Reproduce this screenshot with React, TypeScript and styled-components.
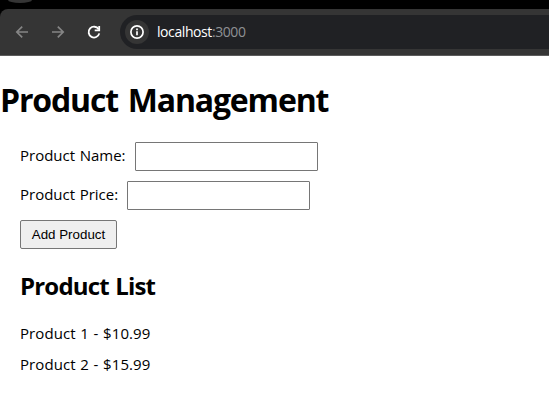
import React from "react";
import styled, { createGlobalStyle } from "styled-components";

const GlobalStyle = createGlobalStyle`
  * { box-sizing: border-box; }
  body {
    margin: 0;
    background: #fff;
    color: #000;
    font-family: "Open Sans", "Noto Sans", sans-serif;
    overflow: hidden;
  }
`;

const TabStrip = styled.div`
  height: 9px;
  background: #000;
  padding-left: 8px;
`;

const TabButton = styled.div`
  width: 24px;
  height: 3px;
  background: #353535;
  border-radius: 0 0 12px 12px / 0 0 3px 3px;
`;

const ToolbarBack = styled.div`
  background: #000;
`;

const Toolbar = styled.div`
  height: 47px;
  display: flex;
  align-items: center;
  background: #353535;
  border-bottom: 1px solid #5c5c5c;
  border-radius: 8px 0 0 0;
  padding-left: 14px;
`;

const NavButton = styled.div<{ $active?: boolean }>`
  width: 16px;
  height: 16px;
  margin-right: 20px;
  color: ${(p) => (p.$active ? "#fff" : "#858585")};
  svg { display: block; }
`;

const AddressBar = styled.div`
  flex: 1;
  height: 34px;
  margin-left: -2px;
  padding-left: 5px;
  display: flex;
  align-items: center;
  background: #202124;
  border-radius: 17px 0 0 17px;
`;

const SiteInfo = styled.div`
  width: 24px;
  height: 24px;
  display: flex;
  align-items: center;
  justify-content: center;
  border-radius: 50%;
  background: #353535;
`;

const Address = styled.div`
  margin-left: 8px;
  font-size: 14px;
  line-height: 20px;
  letter-spacing: -0.42px;
  color: #fff;
`;

const Port = styled.span`
  color: #8f9194;
`;

const Title = styled.h1`
  margin: 22px 0 0;
  height: 44px;
  font-size: 32px;
  line-height: 43px;
  font-weight: 700;
  letter-spacing: -1.15px;
  word-spacing: 2.5px;
  white-space: nowrap;
`;

const Content = styled.main`
  padding: 20px 20px 0;
`;

const Field = styled.label`
  display: flex;
  align-items: flex-start;
  height: 29px;
  margin-bottom: 10px;
`;

const LabelText = styled.span<{ $width: number }>`
  width: ${(p) => p.$width}px;
  margin-right: 10px;
  font-size: 15px;
  line-height: 26px;
  letter-spacing: 0;
  word-spacing: 0.7px;
  white-space: nowrap;
`;

const Input = styled.input`
  width: 183px;
  height: 29px;
  margin: 0;
  padding: 5px;
  border: 1px solid #767676;
  border-radius: 1px;
  background: #fff;
  outline: none;
  font: 13.333px "Liberation Sans", Arial, sans-serif;
`;

const Button = styled.button`
  display: block;
  width: 97px;
  height: 29px;
  padding: 0;
  border: 1px solid #767676;
  border-radius: 2px;
  background: #efefef;
  color: #000;
  font: 13.333px "Liberation Sans", Arial, sans-serif;
  white-space: nowrap;
`;

const Heading = styled.h2`
  margin: 21px 0 0;
  font-size: 24px;
  line-height: 32px;
  font-weight: 700;
  letter-spacing: -0.8px;
  word-spacing: 0.8px;
`;

const List = styled.ul`
  margin: 21px 0 0;
  padding: 0;
  list-style: none;
`;

const Item = styled.li`
  height: 21px;
  margin-bottom: 10px;
  font-size: 15px;
  line-height: 21px;
  letter-spacing: 0.07px;
  word-spacing: 0.7px;
`;

const fields = [
  { label: "Product Name:", width: 105 },
  { label: "Product Price:", width: 97 },
];

const products = [
  { name: "Product 1", price: "10.99" },
  { name: "Product 2", price: "15.99" },
];

const icon = {
  width: 16,
  height: 16,
  viewBox: "0 0 16 16",
  fill: "none",
  stroke: "currentColor",
};

export default function App() {
  return (
    <>
      <GlobalStyle />
      <TabStrip>
        <TabButton />
      </TabStrip>
      <ToolbarBack>
        <Toolbar>
          <NavButton>
            <svg {...icon} strokeWidth="1.7">
              <path d="M14 8H3M8.2 2.6L2.8 8l5.4 5.4" />
            </svg>
          </NavButton>
          <NavButton>
            <svg {...icon} strokeWidth="1.7">
              <path d="M2 8h11M7.8 2.6L13.2 8l-5.4 5.400" />
            </svg>
          </NavButton>
          <NavButton $active>
            <svg {...icon} strokeWidth="1.8">
              <path d="M12.600 5.200A5.400 5.400 0 1 0 13.300 9.400" />
              <path d="M13.200 1.900v4.500H8.700" />
            </svg>
          </NavButton>
          <AddressBar>
            <SiteInfo>
              <svg {...icon} stroke="#fff" strokeWidth="1.7">
                <circle cx="8" cy="8" r="6.1" />
                <path d="M8 7.2v4M8 4.5v1.7" />
              </svg>
            </SiteInfo>
            <Address>
              localhost<Port>:3000</Port>
            </Address>
          </AddressBar>
        </Toolbar>
      </ToolbarBack>
      <Title>Product Management</Title>
      <Content>
        {fields.map((f) => (
          <Field key={f.label}>
            <LabelText $width={f.width}>{f.label}</LabelText>
            <Input type="text" />
          </Field>
        ))}
        <Button type="button">Add Product</Button>
        <Heading>Product List</Heading>
        <List>
          {products.map((p) => (
            <Item key={p.name}>{`${p.name} - $${p.price}`}</Item>
          ))}
        </List>
      </Content>
    </>
  );
}
